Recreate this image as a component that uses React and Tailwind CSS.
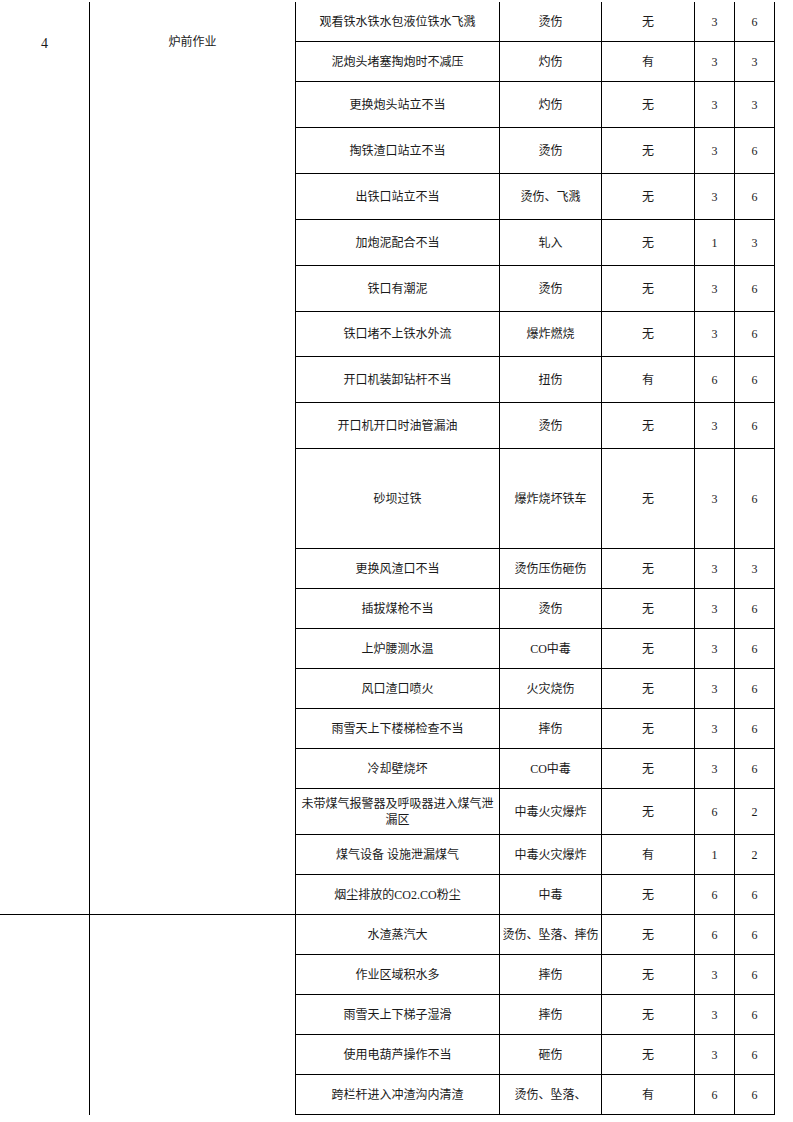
import React from "react"

const font = { fontFamily: '"Liberation Serif", "Noto Sans CJK SC", serif' }

// [task, harm, measure, L, S, row height class]
const furnaceRows = [
  ["观看铁水铁水包液位铁水飞溅", "烫伤", "无", "3", "6", "h-[40px]"],
  ["泥炮头堵塞掏炮时不减压", "灼伤", "有", "3", "3", "h-[40px]"],
  ["更换炮头站立不当", "灼伤", "无", "3", "3", "h-[46px]"],
  ["掏铁渣口站立不当", "烫伤", "无", "3", "6", "h-[46px]"],
  ["出铁口站立不当", "烫伤、飞溅", "无", "3", "6", "h-[46px]"],
  ["加炮泥配合不当", "轧入", "无", "1", "3", "h-[46px]"],
  ["铁口有潮泥", "烫伤", "无", "3", "6", "h-[46px]"],
  ["铁口堵不上铁水外流", "爆炸燃烧", "无", "3", "6", "h-[45px]"],
  ["开口机装卸钻杆不当", "扭伤", "有", "6", "6", "h-[46px]"],
  ["开口机开口时油管漏油", "烫伤", "无", "3", "6", "h-[46px]"],
  ["砂坝过铁", "爆炸烧坏铁车", "无", "3", "6", "h-[100px]"],
  ["更换风渣口不当", "烫伤压伤砸伤", "无", "3", "3", "h-[40px]"],
  ["插拔煤枪不当", "烫伤", "无", "3", "6", "h-[40px]"],
  ["上炉腰测水温", "CO中毒", "无", "3", "6", "h-[40px]"],
  ["风口渣口喷火", "火灾烧伤", "无", "3", "6", "h-[40px]"],
  ["雨雪天上下楼梯检查不当", "摔伤", "无", "3", "6", "h-[40px]"],
  ["冷却壁烧坏", "CO中毒", "无", "3", "6", "h-[40px]"],
  ["未带煤气报警器及呼吸器进入煤气泄漏区", "中毒火灾爆炸", "无", "6", "2", "h-[46px]"],
  ["煤气设备 设施泄漏煤气", "中毒火灾爆炸", "有", "1", "2", "h-[40px]"],
  ["烟尘排放的CO2.CO粉尘", "中毒", "无", "6", "6", "h-[40px]"],
]

const slagRows = [
  ["水渣蒸汽大", "烫伤、坠落、摔伤", "无", "6", "6", "h-[40px]"],
  ["作业区域积水多", "摔伤", "无", "3", "6", "h-[40px]"],
  ["雨雪天上下梯子湿滑", "摔伤", "无", "3", "6", "h-[40px]"],
  ["使用电葫芦操作不当", "砸伤", "无", "3", "6", "h-[40px]"],
  ["跨栏杆进入冲渣沟内清渣", "烫伤、坠落、", "有", "6", "6", "h-[40px]"],
]

const Row = ({ row }) => {
  const [task, harm, measure, l, s, h] = row
  return (
    <div className={`flex border-b border-black ${h}`}>
      <div className="w-[204px] border-r border-black flex items-center justify-center text-center px-[3px] leading-[16px]">
        {task}
      </div>
      <div className="w-[102px] border-r border-black flex items-center justify-center text-center">{harm}</div>
      <div className="w-[93px] border-r border-black flex items-center justify-center">{measure}</div>
      <div className="w-[40px] border-r border-black flex items-center justify-center">{l}</div>
      <div className="w-[40px] border-r border-black flex items-center justify-center">{s}</div>
    </div>
  )
}

export default function App() {
  return (
    <div className="w-[793px] min-h-[1122px] bg-white pt-[2px] text-[12px] text-[#1a1a1a]" style={font}>
      <div className="flex">
        <div className="w-[90px] border-r border-b border-black text-center pt-[34px] text-[14px] leading-[16px]">4</div>
        <div className="w-[206px] border-r border-b border-black text-center pt-[32px] leading-[16px]">炉前作业</div>
        <div className="flex flex-col">
          {furnaceRows.map((row, i) => (
            <Row key={i} row={row} />
          ))}
        </div>
      </div>
      <div className="flex">
        <div className="w-[90px] border-r border-black"></div>
        <div className="w-[206px] border-r border-black"></div>
        <div className="flex flex-col">
          {slagRows.map((row, i) => (
            <Row key={i} row={row} />
          ))}
        </div>
      </div>
    </div>
  )
}
